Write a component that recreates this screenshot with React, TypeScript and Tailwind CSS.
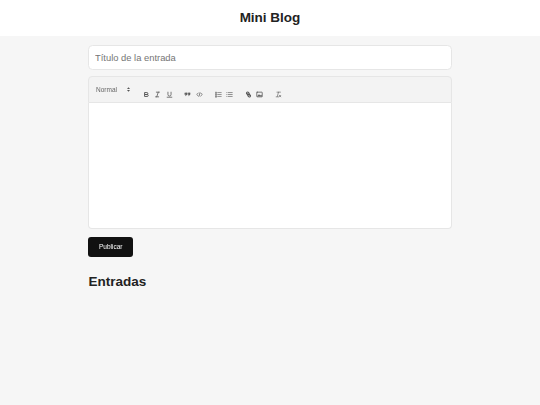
const font = { fontFamily: '"Liberation Sans", Arial, sans-serif' };

function Ico({ children }: { children: React.ReactNode }) {
  return (
    <svg viewBox="0 0 18 18" className="h-[7px] w-[7px]" fill="none" stroke="#555" strokeWidth="2" strokeLinecap="round" strokeLinejoin="round">
      {children}
    </svg>
  );
}

function Toolbar() {
  return (
    <div className="flex h-[27px] items-start rounded-t-[4px] border border-[#e6e6e6] bg-[#f3f3f3] pl-[7px]">
      <div className="mt-[8px] flex w-[34px] items-center justify-between text-[6.5px] leading-[9px] text-[#666] will-change-transform">
        <span>Normal</span>
        <svg viewBox="0 0 6 9" className="h-[5px] w-[3px]" fill="#555">
          <path d="M3 0 6 3.4H0zM3 9 0 5.6h6z" />
        </svg>
      </div>
      <div className="mt-[14px] ml-[12.5px] flex items-center gap-[11.75px]">
        <div className="flex gap-[4.5px]">
          <Ico>
            <path d="M5 4h5a2.5 2.5 0 0 1 0 5H5zM5 9h6a2.5 2.5 0 0 1 0 5H5z" strokeWidth="2.4" />
          </Ico>
          <Ico>
            <path d="M6 3h8M4 15h8M11 3 7 15" />
          </Ico>
          <Ico>
            <path d="M5 3v6a4 4 0 0 0 8 0V3M3 16h12" />
          </Ico>
        </div>
        <div className="flex gap-[4.5px]">
          <Ico>
            <path d="M3 5h4v4H3zM7 5v3a4 4 0 0 1-3 4M11 5h4v4h-4zM15 5v3a4 4 0 0 1-3 4" fill="#555" strokeWidth="1.4" />
          </Ico>
          <Ico>
            <path d="M6 5 2 9l4 4M12 5l4 4-4 4M10 5 8 13" strokeWidth="1.8" />
          </Ico>
        </div>
        <div className="flex gap-[4.5px]">
          <Ico>
            <path d="M7 4h9M7 9h9M7 14h9M2 3h2v3H2zM2 8h2v3H2zM2 13h2v3H2z" strokeWidth="1.5" />
          </Ico>
          <Ico>
            <path d="M6 4h10M6 9h10M6 14h10M2 4h.5M2 9h.5M2 14h.5" strokeWidth="1.6" />
          </Ico>
        </div>
        <div className="flex gap-[4.5px]">
          <Ico>
            <path d="M11 6 8 3a3 3 0 0 0-4 4l3 3M7 12l3 3a3 3 0 0 0 4-4l-3-3M11 11 7 7" strokeWidth="2.6" />
          </Ico>
          <Ico>
            <rect x="2" y="3" width="14" height="12" rx="1" />
            <path d="M4 13l4-4 3 3 2-2 2 3z" fill="#555" strokeWidth="1" />
          </Ico>
        </div>
        <div>
          <Ico>
            <path d="M5 3h9M9 3 6 14M3 15h6M11 11l4 4M15 11l-4 4" strokeWidth="1.5" />
          </Ico>
        </div>
      </div>
    </div>
  );
}

export default function App() {
  return (
    <div className="min-h-screen bg-[#f6f6f6] text-[#222]" style={font}>
      <header className="flex h-[36px] items-center justify-center bg-white">
        <h1 className="text-[13.5px] font-bold text-[#222]">Mini Blog</h1>
      </header>
      <main className="mx-auto w-[364px] pt-[8px]">
        <input
          placeholder="Título de la entrada"
          className="h-[25px] w-full rounded-[4.5px] border border-[#e6e6e6] bg-white px-[6px] text-[9.4px] outline-none placeholder:text-[#757575]"
        />
        <div className="mt-[6px]">
          <Toolbar />
          <div className="h-[126px] rounded-b-[4px] border border-t-0 border-[#e6e6e6] bg-white" />
        </div>
        <button className="mt-[8px] flex h-[20px] w-[45px] items-center justify-center rounded-[3px] bg-[#111] text-white">
          <span className="text-[6.5px] will-change-transform">Publicar</span>
        </button>
        <h2 className="mt-[16px] pl-[0.5px] text-[13.5px] leading-[18px] font-bold text-[#222]">Entradas</h2>
      </main>
    </div>
  );
}
